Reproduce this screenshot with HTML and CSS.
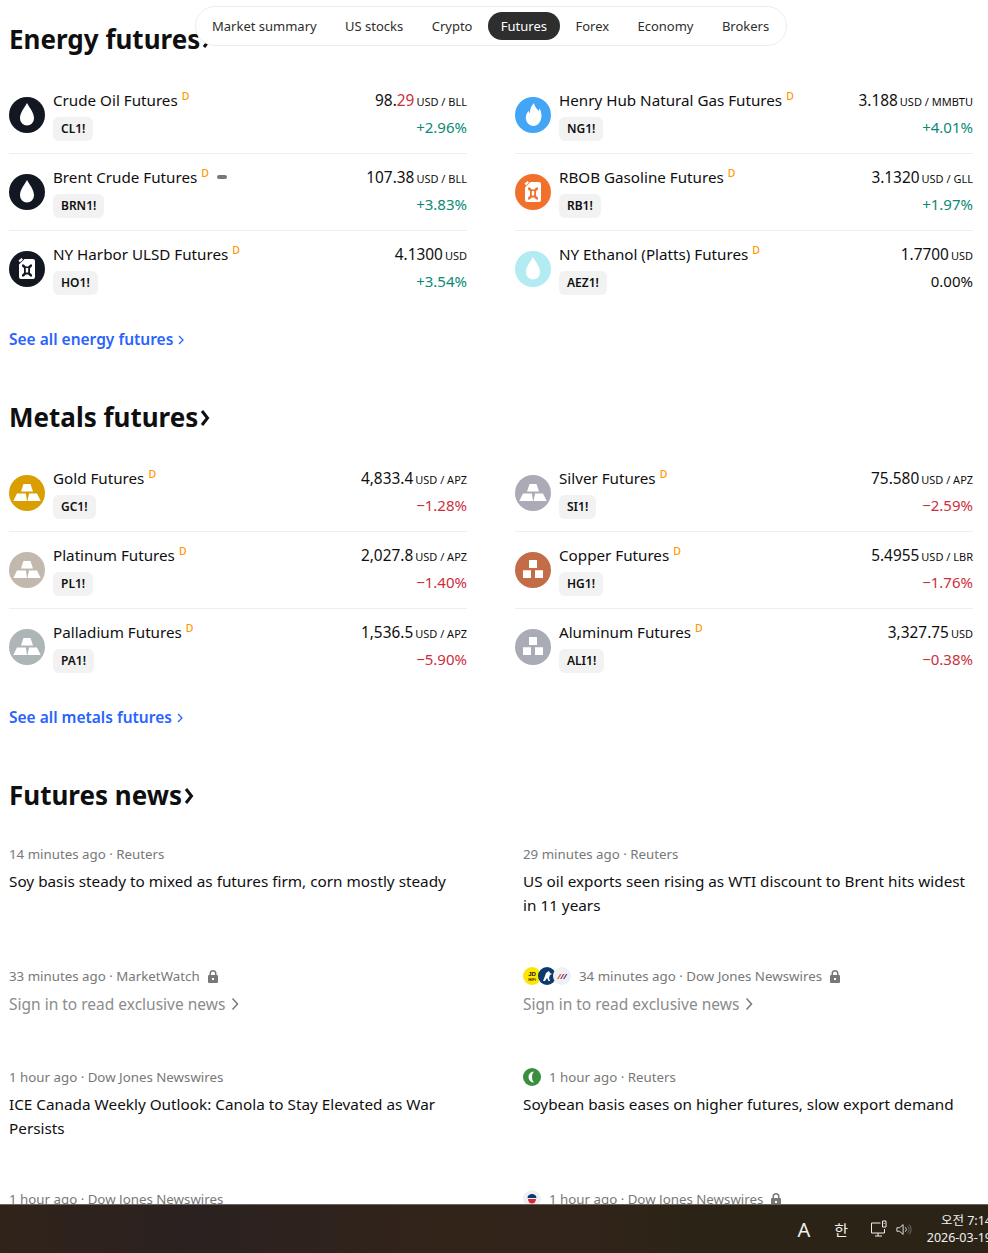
FILE: index.html
```html
<!DOCTYPE html>
<html lang="en">
<head>
  <meta charset="UTF-8" />
  <title>Futures</title>
  <link rel="stylesheet" href="styles.css">
</head>
<body>

<!-- icon set -->
<svg class="defs" width="0" height="0">
  <symbol id="drop" viewBox="0 0 36 36">
    <path d="M18 6c3 5.500 7 9.500 7 15.500a7 7 0 0 1-14 0C11 15.500 15 11.500 18 6z" fill="#fff"/>
  </symbol>
  <symbol id="flame" viewBox="0 0 36 36">
    <path d="M19 6c.6 4 3 5.500 4.500 8 .6-.8.8-1.800.8-2.800 1.300 2 2.200 4.500 2.200 7.300C26.500 24.800 22.900 29 18.500 29S10.800 25.300 10.800 20.500c0-3 1.500-5 2.700-6.800.3 1.200.8 2 1.500 2.600C14.800 12.500 16 9 19 6z" fill="#fff"/>
  </symbol>
  <symbol id="canister" viewBox="0 0 36 36">
    <path fill="#fff" fill-rule="evenodd" d="M15.500 8H24a2 2 0 0 1 2 2v16a2 2 0 0 1-2 2H12a2 2 0 0 1-2-2V13.500zM13 13.500v1.800l2 2v4.400l-2 2v1.800h1.800l2-2h2.400l2 2H23v-1.800l-2-2v-4.400l2-2v-1.800h-1.800l-2 2h-2.400l-2-2zM16.800 17h2.400v4.500h-2.400z"/>
    <path fill="#fff" d="M9.500 9.500L12.500 7 14 8.500 11 11.500z"/>
  </symbol>
  <symbol id="bars" viewBox="0 0 36 36">
    <path fill="#fff" d="M14.500 9h7l2.500 7.500H12zM8 18.500h8.800l1.200 7.500H4.300zM20 18.500h8l3.700 7.500H18.500z"/>
  </symbol>
  <symbol id="cubes" viewBox="0 0 36 36">
    <path fill="#fff" d="M14 8h8v8h-8zM8 18.300h8V26H8zM20 18.300h8V26h-8z"/>
  </symbol>
  <symbol id="lock" viewBox="0 0 14 14">
    <path fill="#787878" fill-rule="evenodd" d="M3.500 6V4.500a3.500 3.500 0 0 1 7 0V6h.5a1 1 0 0 1 1 1v6a1 1 0 0 1-1 1H3a1 1 0 0 1-1-1V7a1 1 0 0 1 1-1zM5 6h4V4.500a2 2 0 0 0-4 0zM6 9v2h2V9z"/>
  </symbol>
</svg>

<!-- Section tabs -->
<nav class="tabs">
  <a href="#">Market summary</a>
  <a href="#">US stocks</a>
  <a href="#">Crypto</a>
  <a href="#" class="active">Futures</a>
  <a href="#">Forex</a>
  <a href="#">Economy</a>
  <a href="#">Brokers</a>
</nav>

<main>
  <!-- Energy -->
  <section class="block">
    <h2>Energy futures<svg class="head-arrow" viewBox="0 0 10 20"><path d="M2 3l5.500 7L2 17" /></svg></h2>
    <div class="quotes">
      <div class="quote">
        <span class="logo black"><svg><use href="#drop"/></svg></span>
        <div class="quote-left"><div class="name">Crude Oil Futures<sup>D</sup></div><span class="ticker">CL1!</span></div>
        <div class="quote-right"><div class="price">98.<b class="down">29</b><small>USD / BLL</small></div><div class="change up">+2.96%</div></div>
      </div>
      <div class="quote">
        <span class="logo blue"><svg><use href="#flame"/></svg></span>
        <div class="quote-left"><div class="name">Henry Hub Natural Gas Futures<sup>D</sup></div><span class="ticker">NG1!</span></div>
        <div class="quote-right"><div class="price">3.188<small>USD / MMBTU</small></div><div class="change up">+4.01%</div></div>
      </div>
      <div class="quote">
        <span class="logo black"><svg><use href="#drop"/></svg></span>
        <div class="quote-left"><div class="name">Brent Crude Futures<sup>D</sup><i class="dash"></i></div><span class="ticker">BRN1!</span></div>
        <div class="quote-right"><div class="price">107.38<small>USD / BLL</small></div><div class="change up">+3.83%</div></div>
      </div>
      <div class="quote">
        <span class="logo orange"><svg><use href="#canister"/></svg></span>
        <div class="quote-left"><div class="name">RBOB Gasoline Futures<sup>D</sup></div><span class="ticker">RB1!</span></div>
        <div class="quote-right"><div class="price">3.1320<small>USD / GLL</small></div><div class="change up">+1.97%</div></div>
      </div>
      <div class="quote">
        <span class="logo black"><svg><use href="#canister"/></svg></span>
        <div class="quote-left"><div class="name">NY Harbor ULSD Futures<sup>D</sup></div><span class="ticker">HO1!</span></div>
        <div class="quote-right"><div class="price">4.1300<small>USD</small></div><div class="change up">+3.54%</div></div>
      </div>
      <div class="quote">
        <span class="logo aqua"><svg><use href="#drop"/></svg></span>
        <div class="quote-left"><div class="name">NY Ethanol (Platts) Futures<sup>D</sup></div><span class="ticker">AEZ1!</span></div>
        <div class="quote-right"><div class="price">1.7700<small>USD</small></div><div class="change">0.00%</div></div>
      </div>
    </div>
    <a href="#" class="see-all">See all energy futures<svg viewBox="0 0 6 10"><path d="M1 1l4 4-4 4"/></svg></a>
  </section>

  <!-- Metals -->
  <section class="block">
    <h2>Metals futures<svg class="head-arrow" viewBox="0 0 10 20"><path d="M2 3l5.500 7L2 17" /></svg></h2>
    <div class="quotes">
      <div class="quote">
        <span class="logo gold"><svg><use href="#bars"/></svg></span>
        <div class="quote-left"><div class="name">Gold Futures<sup>D</sup></div><span class="ticker">GC1!</span></div>
        <div class="quote-right"><div class="price">4,833.4<small>USD / APZ</small></div><div class="change down">−1.28%</div></div>
      </div>
      <div class="quote">
        <span class="logo silver"><svg><use href="#bars"/></svg></span>
        <div class="quote-left"><div class="name">Silver Futures<sup>D</sup></div><span class="ticker">SI1!</span></div>
        <div class="quote-right"><div class="price">75.580<small>USD / APZ</small></div><div class="change down">−2.59%</div></div>
      </div>
      <div class="quote">
        <span class="logo platinum"><svg><use href="#bars"/></svg></span>
        <div class="quote-left"><div class="name">Platinum Futures<sup>D</sup></div><span class="ticker">PL1!</span></div>
        <div class="quote-right"><div class="price">2,027.8<small>USD / APZ</small></div><div class="change down">−1.40%</div></div>
      </div>
      <div class="quote">
        <span class="logo copper"><svg><use href="#cubes"/></svg></span>
        <div class="quote-left"><div class="name">Copper Futures<sup>D</sup></div><span class="ticker">HG1!</span></div>
        <div class="quote-right"><div class="price">5.4955<small>USD / LBR</small></div><div class="change down">−1.76%</div></div>
      </div>
      <div class="quote">
        <span class="logo palladium"><svg><use href="#bars"/></svg></span>
        <div class="quote-left"><div class="name">Palladium Futures<sup>D</sup></div><span class="ticker">PA1!</span></div>
        <div class="quote-right"><div class="price">1,536.5<small>USD / APZ</small></div><div class="change down">−5.90%</div></div>
      </div>
      <div class="quote">
        <span class="logo aluminum"><svg><use href="#cubes"/></svg></span>
        <div class="quote-left"><div class="name">Aluminum Futures<sup>D</sup></div><span class="ticker">ALI1!</span></div>
        <div class="quote-right"><div class="price">3,327.75<small>USD</small></div><div class="change down">−0.38%</div></div>
      </div>
    </div>
    <a href="#" class="see-all">See all metals futures<svg viewBox="0 0 6 10"><path d="M1 1l4 4-4 4"/></svg></a>
  </section>

  <!-- News -->
  <section class="block">
    <h2 class="news-title">Futures news<svg class="head-arrow" viewBox="0 0 10 20"><path d="M2 3l5.500 7L2 17" /></svg></h2>
    <div class="news">
      <article class="story tall">
        <div class="meta">14 minutes ago · Reuters</div>
        <p>Soy basis steady to mixed as futures firm, corn mostly steady</p>
      </article>
      <article class="story tall">
        <div class="meta">29 minutes ago · Reuters</div>
        <p>US oil exports seen rising as WTI discount to Brent hits widest in 11 years</p>
      </article>
      <article class="story short">
        <div class="meta">33 minutes ago · MarketWatch<svg class="lock"><use href="#lock"/></svg></div>
        <p class="locked">Sign in to read exclusive news<svg viewBox="0 0 8 14"><path d="M1.500 1.500l5 5.500-5 5.500"/></svg></p>
      </article>
      <article class="story short">
        <div class="meta">
          <span class="pubs">
            <svg viewBox="0 0 18 18"><circle cx="9" cy="9" r="9" fill="#ffe600"/><text x="9" y="8.500" class="pub-big">JD</text><text x="9" y="13.500" class="pub-small">HiFi</text></svg>
            <svg viewBox="0 0 18 18"><circle cx="9" cy="9" r="9" fill="#0b3a6f"/><path d="M5 14l2-5 1-3 3-2 1 2 2 1-2 1-1 3 1 3h-1.500L9 11l-2 3z" fill="#fff"/></svg>
            <svg viewBox="0 0 18 18"><circle cx="9" cy="9" r="9" fill="#eef0f5"/><path d="M4 12l3-5h1.500l-3 5z" fill="#c9743a"/><path d="M7 12l3-5h1.500l-3 5z" fill="#c8394a"/><path d="M10 12l3-5h1.500l-3 5z" fill="#3b5ea8"/></svg>
          </span>
          34 minutes ago · Dow Jones Newswires<svg class="lock"><use href="#lock"/></svg>
        </div>
        <p class="locked">Sign in to read exclusive news<svg viewBox="0 0 8 14"><path d="M1.500 1.500l5 5.500-5 5.500"/></svg></p>
      </article>
      <article class="story tall">
        <div class="meta">1 hour ago · Dow Jones Newswires</div>
        <p>ICE Canada Weekly Outlook: Canola to Stay Elevated as War Persists</p>
      </article>
      <article class="story tall">
        <div class="meta">
          <span class="pubs">
            <svg viewBox="0 0 18 18"><circle cx="9" cy="9" r="9" fill="#3a8f3f"/><path d="M11 3.500a5.500 5.500 0 1 0 0 11 7 7 0 0 1-2-5.500 7 7 0 0 1 2-5.500z" fill="#fff"/></svg>
          </span>
          1 hour ago · Reuters
        </div>
        <p>Soybean basis eases on higher futures, slow export demand</p>
      </article>
      <article class="story tall">
        <div class="meta">1 hour ago · Dow Jones Newswires</div>
      </article>
      <article class="story tall">
        <div class="meta">
          <span class="pubs">
            <svg viewBox="0 0 18 18"><circle cx="9" cy="9" r="9" fill="#eef0f5"/><path d="M4.500 8a4.500 4 0 0 1 9 0z" fill="#0b3a6f"/><path d="M5 9h8a4 4.500 0 0 1-8 0z" fill="#d5293a"/></svg>
          </span>
          1 hour ago · Dow Jones Newswires<svg class="lock"><use href="#lock"/></svg>
        </div>
      </article>
    </div>
  </section>
</main>

<!-- Windows taskbar -->
<footer class="taskbar">
  <span class="tray-a">A</span>
  <span class="tray-han">한</span>
  <svg class="tray-net" viewBox="0 0 18 18"><path d="M10.500 3H1.500v10h13V9M5 16h7M8 13v3" /><path d="M12.500 1h3.500v6h-3.500zM14.200 3v1" /></svg>
  <svg class="tray-sound" viewBox="0 0 18 14"><path d="M1 5h3l4-3.500v11L4 9H1z" /><path d="M10.500 4.500a3.500 3.500 0 0 1 0 5" /><path class="faint" d="M13 3a6 6 0 0 1 0 8M15 1.500a8.500 8.500 0 0 1 0 11" /></svg>
  <div class="clock">
    <div>오전 7:14</div>
    <div>2026-03-19</div>
  </div>
</footer>

</body>
</html>
```
FILE: styles.css
```css
* { margin: 0; padding: 0; box-sizing: border-box; }
html, body { height: 100%; overflow: hidden; }
body {
  font-family: "Noto Sans", "Noto Sans CJK KR", sans-serif;
  font-size: 15.3px;
  color: #0f0f0f;
  background: #fff;
}

a { text-decoration: none; color: inherit; }
.defs { position: absolute; }

/* tabs */
.tabs {
  position: fixed;
  top: 6px;
  left: 195px;
  width: 592px;
  height: 40px;
  display: flex;
  align-items: center;
  padding-left: 3px;
  gap: 2.4px;
  background: #fff;
  border: 1px solid #ebebeb;
  border-radius: 20px;
  font-size: 13px;
  color: #2e2e2e;
}

.tabs a {
  padding: 0 13px;
  height: 28px;
  line-height: 28px;
  border-radius: 14px;
  white-space: nowrap;
}

.tabs a.active {
  background: #2e2e2e;
  color: #fff;
}

/* sections */
main { padding: 21px 15px 0 9px; }
.block { margin-bottom: 48px; }

h2 {
  font-size: 26px;
  line-height: 36px;
  font-weight: 700;
  margin-bottom: 20px;
  display: flex;
  align-items: center;
}

.head-arrow {
  width: 10px;
  height: 20px;
  margin-left: 2px;
  margin-top: 2px;
  fill: none;
  stroke: #0f0f0f;
  stroke-width: 3;
}

.news-title { margin-bottom: 31px; }

/* quote rows */
.quotes {
  display: grid;
  grid-template-columns: 458px 458px;
  column-gap: 48px;
}

.quote {
  display: flex;
  height: 77px;
  padding: 12px 0;
  border-bottom: 1px solid #efefef;
}

.quote:nth-last-child(-n+2) { border-bottom: none; height: 76px; }

.logo {
  width: 36px;
  height: 36px;
  border-radius: 50%;
  margin: 8px 8px 0 0;
  flex: none;
}

.logo svg { width: 36px; height: 36px; display: block; }

.black { background: #131722; }
.blue { background: #42a5f5; }
.orange { background: #f0702c; }
.aqua { background: #b2ebf2; }
.gold { background: #d99e00; }
.silver { background: #abaab6; }
.platinum { background: #c3b8ad; }
.copper { background: #c26d47; }
.palladium { background: #adb5b7; }
.aluminum { background: #a9abb6; }

.quote-left { flex: 1; }

.name {
  font-size: 15.2px;
  line-height: 24px;
  margin-top: -1px;
  margin-bottom: 5px;
  display: flex;
  align-items: center;
}

.name sup {
  font-size: 10.5px;
  font-weight: 500;
  line-height: 10px;
  color: #ff9800;
  margin: -8px 0 0 4px;
}

.dash {
  width: 10px;
  height: 4px;
  border-radius: 2px;
  background: #787878;
  margin-left: 8px;
}

.ticker {
  display: inline-block;
  height: 24px;
  line-height: 24px;
  padding: 0 8px;
  border-radius: 6px;
  background: #f2f2f2;
  font-size: 12px;
  font-weight: 600;
}

.quote-right { text-align: right; }

.price {
  font-size: 15.4px;
  line-height: 24px;
  margin-bottom: 2px;
}

.price b { font-weight: 400; }

.price small {
  font-size: 11px;
  line-height: 1;
  margin-left: 2px;
}

.change { font-size: 15px; line-height: 24px; }
.up { color: #0a8a76; }
.down { color: #cc2f3c; }

.see-all {
  display: flex;
  align-items: center;
  height: 24px;
  margin-top: 20px;
  font-size: 15.5px;
  font-weight: 600;
  color: #2962ff;
}

.see-all svg {
  width: 6px;
  height: 10px;
  margin-left: 5px;
  margin-top: 2px;
  fill: none;
  stroke: #2962ff;
  stroke-width: 1.300;
}

/* news */
.news {
  display: grid;
  grid-template-columns: 450px 450px;
  column-gap: 64px;
}

.tall { height: 122px; }
.short { height: 101px; }

.meta {
  display: flex;
  align-items: center;
  height: 20px;
  margin-bottom: 6px;
  font-size: 13.3px;
  color: #787878;
}

.story p {
  font-size: 15.3px;
  line-height: 24px;
  margin-top: -1px;
}

.story p.locked {
  margin-top: 0;
  font-size: 15.5px;
  color: #8c8c8c;
  display: flex;
  align-items: center;
}

.locked svg {
  width: 8px;
  height: 14px;
  margin-left: 6px;
  fill: none;
  stroke: #787878;
  stroke-width: 1.500;
}

.lock { width: 14px; height: 14px; margin-left: 6px; }

.pubs { display: flex; margin-right: 8px; }
.pubs svg { width: 18px; height: 18px; margin-right: -3px; }
.pubs svg:last-child { margin-right: 0; }

.pub-big { font: 700 6px "Liberation Sans", sans-serif; text-anchor: middle; fill: #111; }
.pub-small { font: 700 4px "Liberation Sans", sans-serif; text-anchor: middle; fill: #111; }

/* taskbar */
.taskbar {
  position: fixed;
  left: 0;
  right: 0;
  bottom: 0;
  height: 49px;
  display: flex;
  align-items: center;
  justify-content: flex-end;
  overflow: hidden;
  color: #f0f0f0;
  border-top: 1px solid #6d6358;
  background: linear-gradient(90deg, #30231a 0%, #2a2120 20%, #33241a 45%, #31241a 60%, #2b2416 70%, #2b2416 100%);
}

.tray-a { font-size: 20px; margin-right: 24px; font-family: "Noto Sans", sans-serif; }
.tray-han { font-size: 15px; margin-right: 22px; }

.tray-net, .tray-sound {
  fill: none;
  stroke: #f0f0f0;
  stroke-width: 1;
}

.tray-net { width: 18px; height: 18px; margin-right: 8px; }
.tray-sound { width: 16px; height: 13px; margin-right: 12px; }
.faint { stroke: #77706a; }

.clock {
  width: 68px;
  margin-right: -4px;
  flex: none;
  text-align: right;
  font-size: 12.5px;
  line-height: 17px;
}
```
